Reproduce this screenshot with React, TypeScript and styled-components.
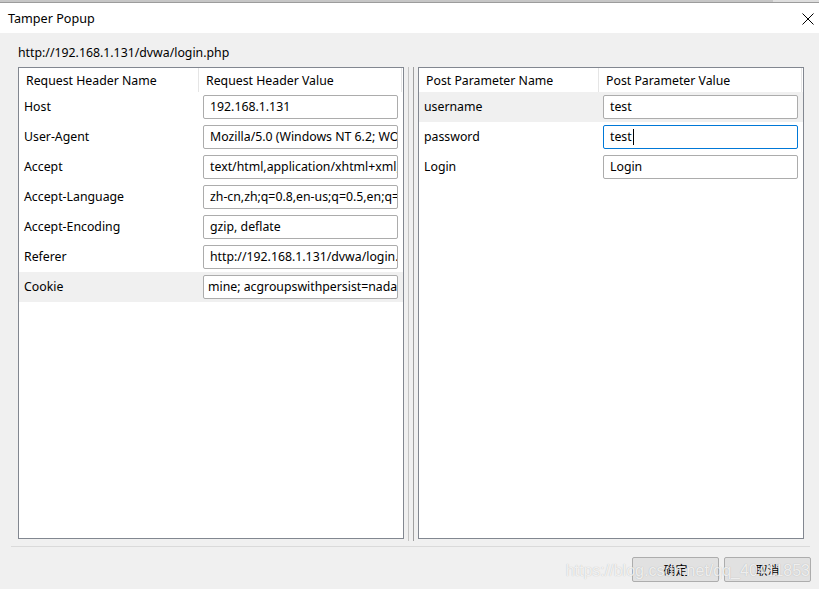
import React from "react";
import styled, { createGlobalStyle } from "styled-components";

const Global = createGlobalStyle`
  html, body { margin: 0; padding: 0; background: #f0f0f0; }
  body { font-family: "Noto Sans", "Noto Sans CJK SC", sans-serif; font-size: 12.3px; color: #000; }
  * { box-sizing: border-box; }
`;

const Window = styled.div`
  position: relative;
  width: 819px;
  height: 589px;
  display: flex;
  flex-direction: column;
  background: #f0f0f0;
  overflow: hidden;
`;

const TopStrip = styled.div`
  height: 3px;
  display: flex;
  border-bottom: 1px solid #9c9c9c;
`;

const StripPart = styled.div<{ $w?: number; $c: string }>`
  background: ${(p) => p.$c};
  ${(p) => (p.$w ? `width: ${p.$w}px;` : "flex: 1;")}
`;

const TitleBar = styled.div`
  height: 30px;
  background: #fff;
  display: flex;
  align-items: center;
  justify-content: space-between;
  padding: 1px 5px 0 8px;
`;

const Title = styled.span`
  font-size: 12.6px;
  line-height: 16px;
`;

const UrlLabel = styled.div`
  margin: 12px 0 0 18px;
  line-height: 16px;
  height: 16px;
`;

const PanesRow = styled.div`
  margin: 6px 0 0 18px;
  height: 472px;
  display: flex;
`;

const Pane = styled.div`
  width: 386px;
  height: 100%;
  border: 1px solid #828790;
  background: #fff;
  display: flex;
  flex-direction: column;
`;

const Splitter = styled.div`
  width: 14px;
  height: 474px;
  display: flex;
  padding-left: 4px;
  gap: 4px;
`;

const SplitLine = styled.div<{ $c: string }>`
  width: 1px;
  background: ${(p) => p.$c};
`;

const HeaderRow = styled.div`
  height: 24px;
  display: flex;
  flex-shrink: 0;
`;

const HeaderCell = styled.div<{ $w: number }>`
  width: ${(p) => p.$w}px;
  border-right: 1px solid #e5e5e5;
  padding-left: 7px;
  display: flex;
  align-items: center;
  white-space: nowrap;
`;

const Row = styled.div<{ $sel?: boolean }>`
  height: 30px;
  display: flex;
  align-items: center;
  padding-bottom: 1px;
  background: ${(p) => (p.$sel ? "#f0f0f0" : "#fff")};
`;

const NameCell = styled.div`
  width: 180px;
  padding-left: 5px;
  white-space: nowrap;
`;

const ValueCell = styled.div`
  padding-left: 4px;
  display: flex;
  align-items: center;
`;

const Field = styled.div<{ $focus?: boolean; $pad?: number }>`
  width: 195px;
  height: 24px;
  border: 1px solid ${(p) => (p.$focus ? "#0078d7" : "#acacac")};
  border-radius: 2px;
  background: #fff;
  padding-left: ${(p) => p.$pad ?? 6}px;
  display: flex;
  align-items: center;
  white-space: nowrap;
  overflow: hidden;
`;

const Caret = styled.span`
  display: inline-block;
  width: 1px;
  height: 16px;
  background: #000;
  margin-left: 1px;
`;

const Separator = styled.div`
  margin: 7px 9px 0 11px;
  height: 1px;
  background: #dadada;
`;

const ButtonBar = styled.div`
  margin-top: 10px;
  padding-right: 8px;
  display: flex;
  justify-content: flex-end;
  gap: 5px;
`;

const Button = styled.div<{ $w: number }>`
  width: ${(p) => p.$w}px;
  height: 25px;
  background: #e1e1e1;
  border: 1px solid #adadad;
  border-radius: 2px;
  display: flex;
  align-items: center;
  justify-content: center;
  font-family: "Noto Sans CJK SC", sans-serif;
  font-size: 12px;
`;

const Watermark = styled.div`
  position: absolute;
  right: 9px;
  bottom: 9px;
  font-family: "Liberation Sans", Arial, sans-serif;
  font-size: 16px;
  color: rgba(255, 255, 255, 0.8);
  text-shadow: 0 0 1px rgba(0, 0, 0, 0.25);
  pointer-events: none;
  white-space: nowrap;
`;

const CloseIcon = () => (
  <svg width="12" height="12" viewBox="0 0 12 12">
    <path d="M0.5 0.5 L11.5 11.5 M11.5 0.5 L0.5 11.5" stroke="#000" strokeWidth="1" fill="none" />
  </svg>
);

type Item = { name: string; value: string; sel?: boolean; focus?: boolean; pad?: number };

const headers: Item[] = [
  { name: "Host", value: "192.168.1.131" },
  { name: "User-Agent", value: "Mozilla/5.0 (Windows NT 6.2; WOW64; rv:18.0) Gecko/20100101 Firefox/18.0" },
  { name: "Accept", value: "text/html,application/xhtml+xml,application/xml;q=0.9,*/*;q=0.8" },
  { name: "Accept-Language", value: "zh-cn,zh;q=0.8,en-us;q=0.5,en;q=0.3" },
  { name: "Accept-Encoding", value: "gzip, deflate" },
  { name: "Referer", value: "http://192.168.1.131/dvwa/login.php" },
  { name: "Cookie", value: "mine; acgroupswithpersist=nada", sel: true, pad: 4 },
];

const params: Item[] = [
  { name: "username", value: "test", sel: true },
  { name: "password", value: "test", focus: true },
  { name: "Login", value: "Login" },
];

const Table = ({ cols, items }: { cols: [string, string]; items: Item[] }) => (
  <Pane>
    <HeaderRow>
      <HeaderCell $w={180}>{cols[0]}</HeaderCell>
      <HeaderCell $w={203}>{cols[1]}</HeaderCell>
    </HeaderRow>
    {items.map((it) => (
      <Row key={it.name} $sel={it.sel}>
        <NameCell>{it.name}</NameCell>
        <ValueCell>
          <Field $focus={it.focus} $pad={it.pad}>
            {it.value}
            {it.focus && <Caret />}
          </Field>
        </ValueCell>
      </Row>
    ))}
  </Pane>
);

export default function App() {
  return (
    <>
      <Global />
      <Window>
        <TopStrip>
          <StripPart $w={773} $c="#c6c6c6" />
          <StripPart $c="#dedede" />
        </TopStrip>
        <TitleBar>
          <Title>Tamper Popup</Title>
          <CloseIcon />
        </TitleBar>
        <UrlLabel>http://192.168.1.131/dvwa/login.php</UrlLabel>
        <PanesRow>
          <Table cols={["Request Header Name", "Request Header Value"]} items={headers} />
          <Splitter>
            <SplitLine $c="#c4c4c4" />
            <SplitLine $c="#a0a0a0" />
          </Splitter>
          <Table cols={["Post Parameter Name", "Post Parameter Value"]} items={params} />
        </PanesRow>
        <Separator />
        <ButtonBar>
          <Button $w={87}>确定</Button>
          <Button $w={87}>取消</Button>
        </ButtonBar>
        <Watermark>https://blog.csdn.net/qq_40411853</Watermark>
      </Window>
    </>
  );
}
